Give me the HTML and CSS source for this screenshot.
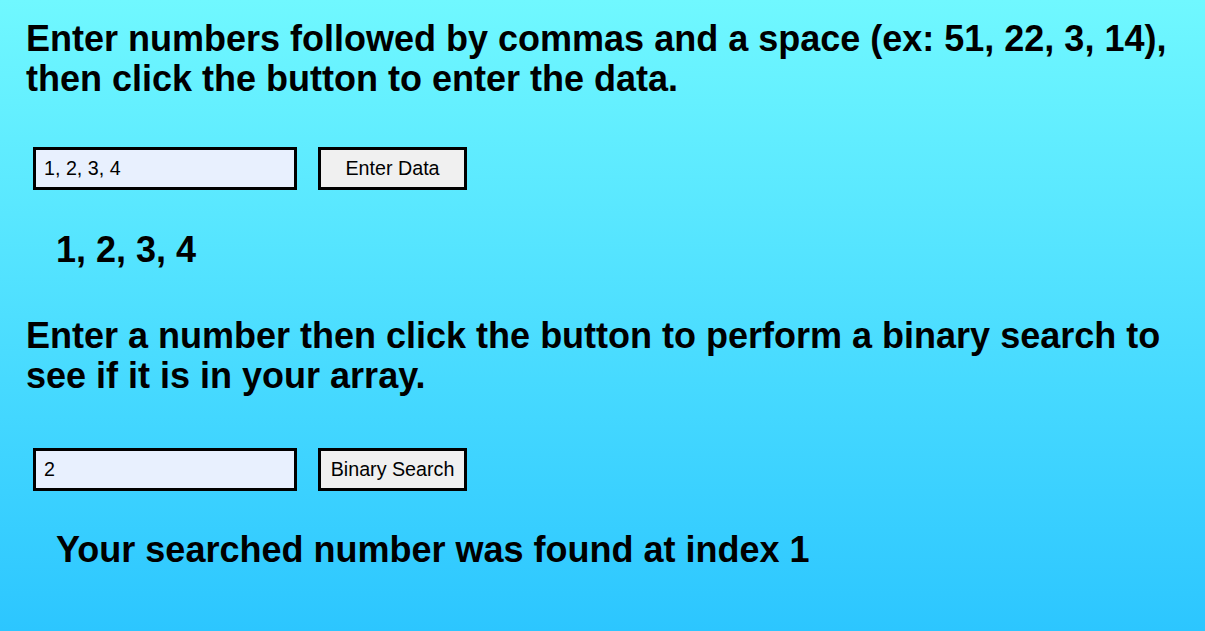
FILE: index.html
```html
<!DOCTYPE html>
<html>
<head>
<meta charset="utf-8">
<link rel="stylesheet" href="styles.css">
</head>
<body>
<main class="page">
  <h2 class="prompt">Enter numbers followed by commas and a space (ex: 51, 22, 3, 14), then click the button to enter the data.</h2>
  <div class="row row-first">
    <input class="field" type="text" value="1, 2, 3, 4">
    <button class="btn" type="button">Enter Data</button>
  </div>
  <p class="result result-first">1, 2, 3, 4</p>
  <h2 class="prompt">Enter a number then click the button to perform a binary search to see if it is in your array.</h2>
  <div class="row row-second">
    <input class="field" type="text" value="2">
    <button class="btn" type="button">Binary Search</button>
  </div>
  <p class="result result-second">Your searched number was found at index 1</p>
</main>
</body>
</html>
```

FILE: styles.css
```css
html, body {
  margin: 0;
  padding: 0;
}
body {
  min-height: 100vh;
  background: linear-gradient(to bottom, #70f8ff 0%, #2cc6ff 100%);
  font-family: "Liberation Sans", Arial, sans-serif;
  color: #000;
}
.page {
  padding: 19px 20px 0 26px;
}
.prompt {
  margin: 0;
  font-size: 36px;
  line-height: 40px;
  font-weight: bold;
}
.row {
  display: flex;
  gap: 21px;
  margin-left: 7px;
}
.row-first {
  margin-top: 48px;
}
.row-second {
  margin-top: 52px;
}
.field {
  box-sizing: border-box;
  width: 264px;
  height: 43px;
  border: 3px solid #000;
  background: #e8f0fe;
  padding: 0 8px;
  margin: 0;
  font-family: "Liberation Sans", Arial, sans-serif;
  font-size: 19.7px;
  color: #000;
  outline: none;
}
.btn {
  box-sizing: border-box;
  width: 149px;
  height: 43px;
  border: 3px solid #000;
  background: #f0f0f0;
  margin: 0;
  padding: 0;
  font-family: "Liberation Sans", Arial, sans-serif;
  font-size: 19.7px;
  color: #000;
}
.result {
  font-size: 36px;
  font-weight: bold;
  line-height: 40px;
  padding-left: 30px;
}
.result-first {
  margin: 40px 0 46px;
}
.result-second {
  margin: 39px 0 0;
}
```
